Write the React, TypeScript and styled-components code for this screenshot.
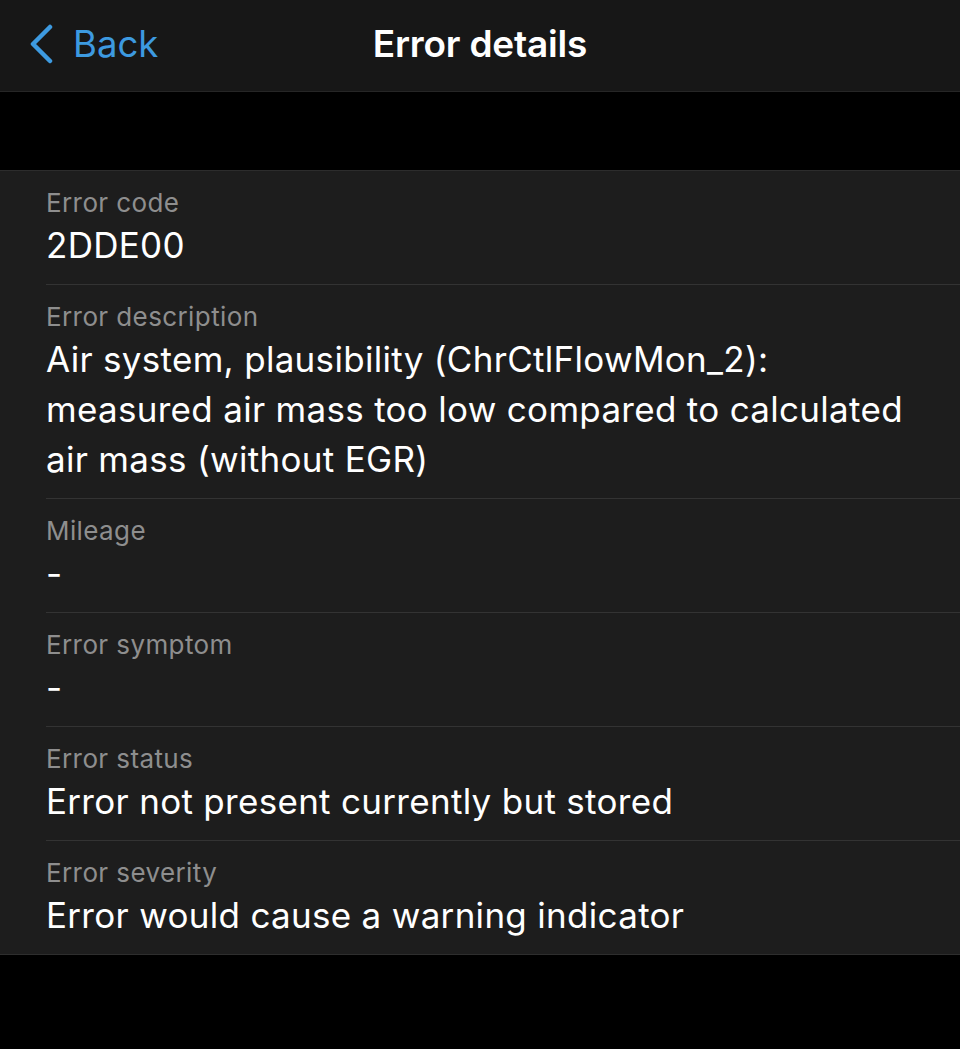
import React from "react";
import styled, { createGlobalStyle } from "styled-components";

const Global = createGlobalStyle`
  html, body { margin: 0; padding: 0; background: #000; }
  body { font-family: Inter, "Noto Sans", "Liberation Sans", sans-serif; -webkit-font-smoothing: antialiased; }
  #root { min-height: 1049px; background: #000; }
`;

const Page = styled.div`
  display: flex;
  flex-direction: column;
  width: 960px;
  min-height: 1049px;
  background: #000;
`;

const NavBar = styled.header`
  display: grid;
  grid-template-columns: 1fr auto 1fr;
  align-items: center;
  height: 92px;
  background: #171717;
  border-bottom: 1px solid #262626;
  box-sizing: border-box;
  padding: 0 28px 4px;
`;

const BackButton = styled.button`
  display: flex;
  align-items: center;
  gap: 19px;
  justify-self: start;
  background: none;
  border: 0;
  padding: 0;
  color: #3d9ae0;
  font-family: inherit;
  font-size: 36.5px;
  font-weight: 400;
  cursor: pointer;
  svg { display: block; }
`;

const Title = styled.h1`
  margin: 0;
  color: #fff;
  font-size: 37px;
  font-weight: 600;
  letter-spacing: -0.2px;
`;

const Spacer = styled.div`
  height: 78px;
`;

const List = styled.section`
  background: #1d1d1d;
  border-top: 1px solid #2c2c2c;
  border-bottom: 1px solid #2e2e2e;
  padding-left: 46px;
`;

const Row = styled.div<{ $last?: boolean }>`
  display: flex;
  flex-direction: column;
  gap: 2px;
  padding: 17px 24px 14px 0;
  border-bottom: ${(p) => (p.$last ? "0" : "1px solid #333")};
`;

const Label = styled.div`
  color: #8e8e8e;
  font-size: 26px;
  line-height: 30px;
  letter-spacing: 0.4px;
`;

const Value = styled.div`
  color: #fff;
  font-size: 35px;
  line-height: 50px;
  letter-spacing: 0.3px;
`;

const rows = [
  { label: "Error code", value: "2DDE00" },
  {
    label: "Error description",
    value:
      "Air system, plausibility (ChrCtlFlowMon_2): measured air mass too low compared to calculated air mass (without EGR)",
  },
  { label: "Mileage", value: "-" },
  { label: "Error symptom", value: "-" },
  { label: "Error status", value: "Error not present currently but stored" },
  { label: "Error severity", value: "Error would cause a warning indicator" },
];

export default function App() {
  return (
    <Page>
      <Global />
      <NavBar>
        <BackButton>
          <svg width="26" height="40" viewBox="0 0 26 40" fill="none">
            <path d="M22 3 L5 20 L22 37" stroke="#3d9ae0" strokeWidth="4.5" strokeLinecap="round" strokeLinejoin="round" />
          </svg>
          Back
        </BackButton>
        <Title>Error details</Title>
        <div />
      </NavBar>
      <Spacer />
      <List>
        {rows.map((r, i) => (
          <Row key={r.label} $last={i === rows.length - 1}>
            <Label>{r.label}</Label>
            <Value>{r.value}</Value>
          </Row>
        ))}
      </List>
    </Page>
  );
}
